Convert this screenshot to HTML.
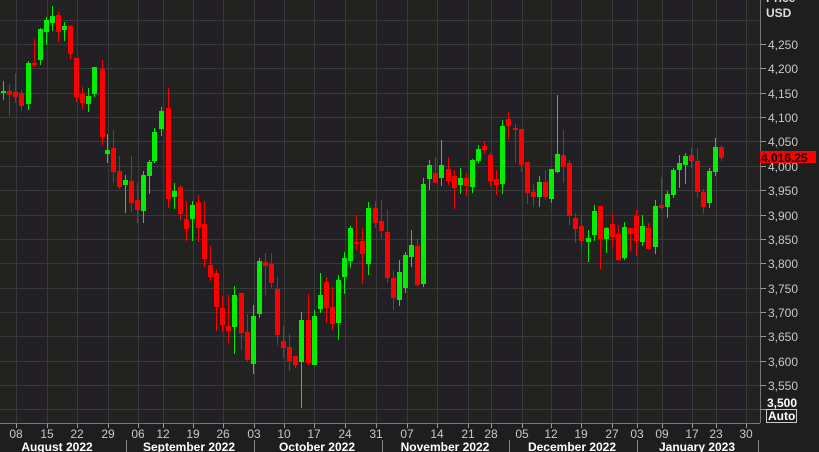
<!DOCTYPE html>
<html><head><meta charset="utf-8"><style>
html,body{margin:0;padding:0;background:#1e1e1e;}
body{width:819px;height:452px;overflow:hidden;position:relative;font-family:"Liberation Sans",sans-serif;}
svg{position:absolute;left:0;top:0;}
</style></head><body>
<svg id="s" width="819" height="452" xmlns="http://www.w3.org/2000/svg">
<rect x="0" y="0" width="819" height="452" fill="#1e1e1e"/>
<rect x="0" y="0" width="760" height="423" fill="#222320"/>
<g id="bands"></g>
<g id="grid" stroke="#3a3a3a" stroke-width="1"></g>
<g id="candles"></g>
<line x1="760.5" y1="0" x2="760.5" y2="423" stroke="#777" />
<line x1="0" y1="423.5" x2="760" y2="423.5" stroke="#777" />
<g id="ticks" stroke="#999"></g>
<g font-size="12" fill="#c8c8c8" font-family="Liberation Sans,sans-serif">
<text x="766" y="2" font-weight="bold" fill="#ddd">Price</text>
<text x="766" y="17" font-weight="bold" fill="#ddd">USD</text>
<g id="plabels"></g>
<text x="767" y="407" font-weight="bold" fill="#fff">3,500</text>
<rect x="766.5" y="409.5" width="30" height="13" fill="none" stroke="#ccc"/>
<text x="768" y="420" font-weight="bold" fill="#fff">Auto</text>
<rect x="760" y="151" width="56" height="12" fill="#ff0000"/>
<text x="761" y="162" font-weight="bold" fill="#000" font-size="12">4,016.25</text>
<g id="dlabels" text-anchor="middle"></g>
<g font-weight="bold" fill="#fff" text-anchor="middle">
<text x="57" y="451">August 2022</text>
<text x="189" y="451">September 2022</text>
<text x="317" y="451">October 2022</text>
<text x="445" y="451">November 2022</text>
<text x="572" y="451">December 2022</text>
<text x="697" y="451">January 2023</text>
</g>
</g>
<g stroke="#888">
<line x1="126.5" y1="440" x2="126.5" y2="452"/><line x1="254.5" y1="440" x2="254.5" y2="452"/>
<line x1="382.5" y1="440" x2="382.5" y2="452"/><line x1="509.5" y1="440" x2="509.5" y2="452"/>
<line x1="637.5" y1="440" x2="637.5" y2="452"/><line x1="758.5" y1="440" x2="758.5" y2="452"/>
</g>
</svg>
<script>
var NS="http://www.w3.org/2000/svg";
function el(p,t,a,txt){var e=document.createElementNS(NS,t);for(var k in a)e.setAttribute(k,a[k]);if(txt)e.textContent=txt;document.getElementById(p).appendChild(e);}
var vx=[16,47,77,108,138,163,193,223,254,284,314,345,376,407,437,468,491,522,551,581,612,637,662,692,716,746];
var dl=["08","15","22","29","06","12","19","26","03","10","17","24","31","07","14","21","28","05","12","19","27","03","09","17","23","30"];
var prev=0;
for(var i=0;i<=vx.length;i++){var nx=i<vx.length?vx[i]:760;if(i%2==1)el("bands","rect",{x:prev,y:0,width:nx-prev,height:423,fill:"#221f25"});prev=nx;}
vx.forEach(function(x,i){el("grid","line",{x1:x+.5,y1:0,x2:x+.5,y2:423});el("ticks","line",{x1:x+.5,y1:424,x2:x+.5,y2:428});el("dlabels","text",{x:x,y:438},dl[i]);});
var labs=["4,250","4,200","4,150","4,100","4,050","4,000","3,950","3,900","3,850","3,800","3,750","3,700","3,650","3,600","3,550"];
for(var k=-1;k<=15;k++){var y=Math.round(44+k*24.36);el("grid","line",{x1:0,y1:y+.5,x2:760,y2:y+.5});if(k>=0&&k<=15)el("ticks","line",{x1:761,y1:y+.5,x2:766,y2:y+.5});if(k>=0&&k<15)el("plabels","text",{x:768,y:y+5},labs[k]);}
var c=[[3,92,91,81,100],[9,91,95,84,116],[15,92,97,73,103],[21,93,106,90,111],[28,104,63,61,110],[34,63,64,39,67],[40,60,29,28,65],[46,32,20,17,45],[52,23,16,6,31],[58,15,32,12,42],[64,30,26,22,41],[70,26,54,25,59],[76,58,97,58,102],[82,94,103,87,109],[88,104,96,88,112],[94,94,67,67,97],[102,69,137,60,145],[107,154,150,134,163],[113,148,172,130,183],[119,171,187,156,189],[125,185,180,175,213],[131,181,203,156,212],[137,200,210,183,223],[143,211,175,171,223],[149,176,162,160,194],[154,161,132,128,163],[161,129,111,107,136],[168,108,199,88,208],[174,197,191,183,209],[180,187,214,185,220],[186,219,229,201,241],[192,219,205,201,241],[198,202,228,195,242],[204,224,259,201,267],[210,265,277,246,281],[216,273,307,270,331],[222,308,325,296,332],[228,326,331,295,343],[234,327,295,286,354],[241,293,333,293,350],[247,332,360,314,362],[253,364,316,305,374],[259,314,261,258,318],[265,262,266,253,295],[271,264,283,253,288],[277,289,335,277,345],[283,341,348,326,358],[289,347,361,334,371],[295,356,365,356,368],[301,362,320,312,408],[308,320,363,294,365],[314,365,316,310,365],[320,309,295,273,313],[326,282,308,277,323],[332,307,324,287,330],[338,323,280,275,340],[344,277,258,252,294],[350,261,228,226,268],[356,242,243,215,250],[362,241,254,228,284],[368,264,208,202,275],[375,208,223,201,228],[381,221,231,200,238],[387,232,278,210,283],[393,278,298,271,310],[399,300,272,260,306],[405,288,255,252,293],[411,257,245,230,267],[417,246,285,239,287],[423,284,184,178,287],[429,179,165,160,190],[435,173,183,157,183],[441,178,165,140,186],[448,169,181,157,185],[454,176,188,170,209],[460,185,178,168,194],[466,178,186,173,196],[472,187,160,159,193],[478,161,149,145,163],[484,146,150,141,154],[490,155,181,153,186],[496,179,185,170,195],[502,184,126,120,194],[508,119,126,112,140],[515,128,129,124,163],[521,129,165,129,172],[527,162,193,162,204],[533,192,197,184,207],[539,197,182,176,207],[545,182,197,170,200],[551,199,169,169,203],[557,172,154,95,173],[563,155,167,130,183],[569,163,216,160,225],[575,218,229,213,243],[581,226,241,214,250],[588,242,238,230,262],[594,235,211,205,241],[600,206,239,206,269],[606,239,228,227,253],[612,224,237,213,247],[618,234,260,225,261],[624,258,227,222,260],[630,228,234,228,251],[636,216,241,210,256],[642,242,226,215,246],[648,228,249,223,250],[655,247,206,200,254],[661,205,208,177,210],[667,207,194,191,218],[673,195,170,168,198],[679,170,163,155,188],[685,165,156,153,184],[691,155,161,148,168],[697,161,192,148,198],[703,192,207,189,214],[709,203,171,168,208],[715,172,147,138,176],[721,147,158,145,161]];
c.forEach(function(d){var x=d[0],o=d[1],cl=d[2],g=cl<o,col=g?"#00ee00":"#ff0000";
el("candles","line",{x1:x+.5,y1:d[3],x2:x+.5,y2:d[4],stroke:col,"stroke-width":1});
var t=Math.min(o,cl),h=Math.max(Math.abs(o-cl),2);el("candles","rect",{x:x-2,y:t,width:5,height:h,fill:col});});
</script>
</body></html>
